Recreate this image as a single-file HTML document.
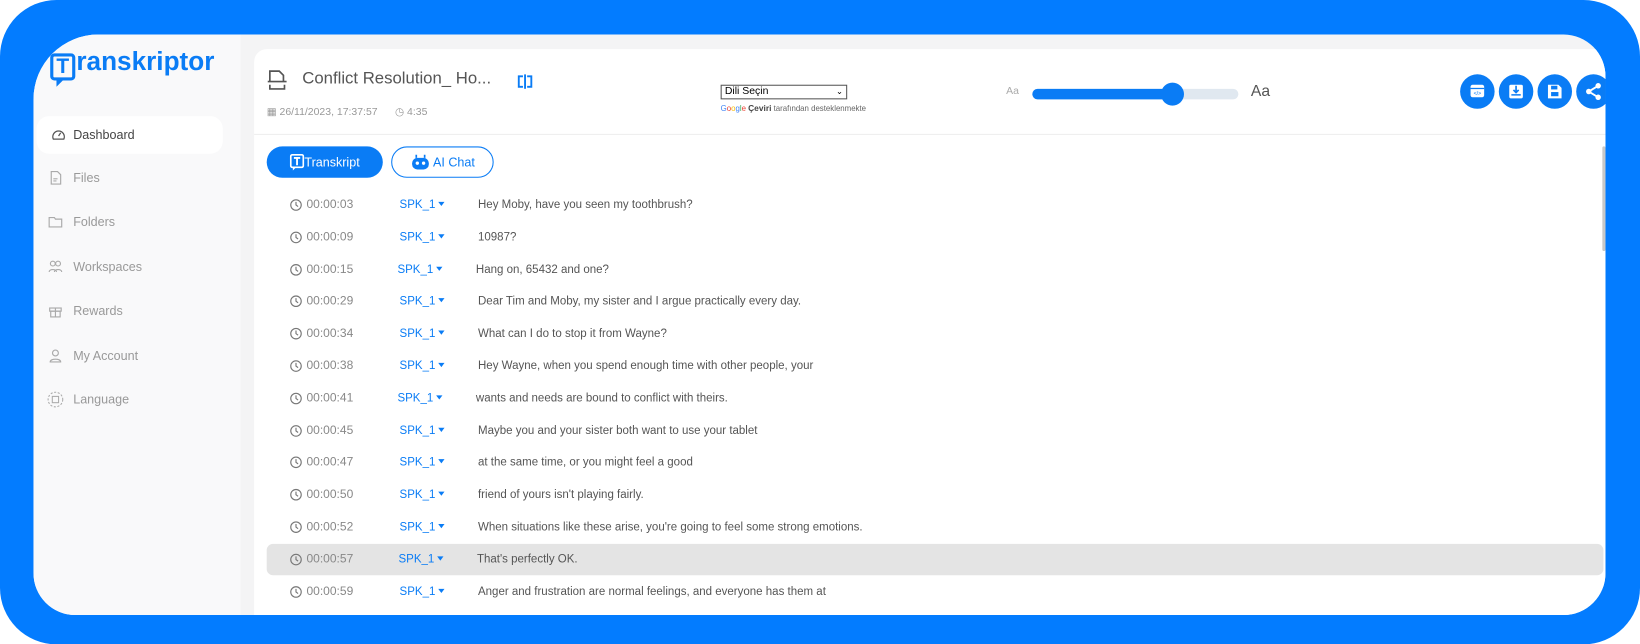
<!DOCTYPE html>
<html><head><meta charset="utf-8"><style>
*{box-sizing:border-box;margin:0;padding:0}
html,body{width:1640px;height:644px;overflow:hidden;background:#fff}
body{font-family:"Liberation Sans","DejaVu Sans",sans-serif;position:relative}
#wrap{position:absolute;left:0;top:0;width:1568px;height:616px;transform:scale(1.04592);transform-origin:0 0}
.outer{position:absolute;left:0;top:0;width:1568px;height:616px;background:#037cff;border-radius:54px}
.panel{position:absolute;left:32px;top:33px;width:1503px;height:555px;background:#f4f4f5;border-radius:62px 40px 40px 40px;overflow:hidden}
.side{position:absolute;left:0;top:0;width:198px;height:555px;background:#f9f9fa}
.logo{position:absolute;left:16px;top:12px;font-size:25px;font-weight:bold;color:#0a7cf5}
.logo .t{display:inline-block;width:24px;height:26px;border:3px solid #0a7cf5;border-radius:4px;text-align:center;line-height:20px;font-size:20px;vertical-align:-3px;margin-right:1px;position:relative}
.logo .t:after{content:"";position:absolute;left:3px;bottom:-9px;border-left:7px solid #0a7cf5;border-bottom:7px solid transparent}
.nav{position:absolute;left:0;width:178px;height:36px;font-size:12px;color:#999;line-height:36px;padding-left:38px}
.nav.act{background:#fff;border-radius:12px;color:#444;left:3px;padding-left:35px}
.nav svg{position:absolute;left:14px;top:11px}
.card{position:absolute;left:211px;top:14px;width:1300px;height:560px;background:#fff;border-radius:12px}
.title{position:absolute;left:46px;top:20px;font-size:16px;color:#555}
.meta{position:absolute;left:12px;top:55px;font-size:10px;color:#999}
.hr{position:absolute;left:0;top:81px;width:1300px;height:1px;background:#eee}
.btn1{position:absolute;left:12px;top:93px;width:111px;height:30px;background:#0a7cf5;border-radius:16px;color:#fff;font-size:12px;line-height:30px;padding-left:36px}
.btn2{position:absolute;left:131px;top:93px;width:98px;height:30px;border:1px solid #0a7cf5;border-radius:16px;color:#0a7cf5;font-size:12px;line-height:28px;padding-left:39px}
.row{position:absolute;left:12px;width:1278px;height:30px;font-size:11px;line-height:30px;color:#555}
.row.hl{background:#e4e4e4;border-radius:6px}
.row .tm{position:absolute;left:38px;color:#888;font-size:11.5px}
.row svg.c{position:absolute;left:22px;top:9px}
.row .sp{position:absolute;left:127px;color:#0a7cf5;font-size:11px}
.row .sp:after{content:"";display:inline-block;margin-left:3px;border-left:3.5px solid transparent;border-right:3.5px solid transparent;border-top:4px solid #0a7cf5;vertical-align:2px}
.row .tx{position:absolute;left:202px}
.circ{position:absolute;top:24px;width:33px;height:33px;border-radius:50%;background:#0a7cf5}
</style></head><body>
<div id="wrap">
<div class="outer"></div>
<div class="panel">
 <div class="side">
  <div class="logo"><span class="t">T</span>ranskriptor</div>
  <div class="nav act" style="top:78px"><svg width="14" height="14" viewBox="0 0 14 14" fill="none" stroke="#555" stroke-width="1.2"><path d="M2 11a5.5 5.5 0 1 1 10 0z"/><path d="M7 8l2-3"/></svg>Dashboard</div>
  <div class="nav" style="top:119px"><svg width="14" height="14" viewBox="0 0 14 14" fill="none" stroke="#aaa" stroke-width="1.1"><path d="M3 1h6l3 3v9H3z"/><path d="M5 8h4M5 10h3"/></svg>Files</div>
  <div class="nav" style="top:161px"><svg width="14" height="14" viewBox="0 0 14 14" fill="none" stroke="#aaa" stroke-width="1.1"><path d="M1 3h5l1 1.5h6V12H1z"/></svg>Folders</div>
  <div class="nav" style="top:204px"><svg width="14" height="14" viewBox="0 0 14 14" fill="none" stroke="#aaa" stroke-width="1.1"><circle cx="4.5" cy="4" r="2.3"/><circle cx="9.5" cy="4" r="2.3"/><path d="M1 12c0-3 7-3 7 0M6 12c0-3 7-3 7 0"/></svg>Workspaces</div>
  <div class="nav" style="top:246px"><svg width="14" height="14" viewBox="0 0 14 14" fill="none" stroke="#aaa" stroke-width="1.1"><rect x="1.5" y="4.5" width="11" height="3"/><rect x="2.5" y="7.5" width="9" height="5.5"/><path d="M7 4.5v8.5"/></svg>Rewards</div>
  <div class="nav" style="top:289px"><svg width="14" height="14" viewBox="0 0 14 14" fill="none" stroke="#aaa" stroke-width="1.1"><circle cx="7" cy="4.5" r="2.8"/><path d="M2 13c0-3.5 10-3.5 10 0z"/></svg>My Account</div>
  <div class="nav" style="top:331px"><svg width="16" height="16" viewBox="0 0 16 16" fill="none" stroke="#aaa" stroke-width="1" style="left:13px;top:10px"><circle cx="8" cy="8" r="7" stroke-dasharray="2 1.5"/><rect x="5" y="5" width="6" height="6"/></svg>Language</div>
 </div>
 <div class="card">
  <svg style="position:absolute;left:12px;top:19px" width="20" height="22" viewBox="0 0 20 22" fill="none" stroke="#555" stroke-width="1.6"><path d="M3 12V2h9l4 4v6"/><path d="M1 12h18"/><path d="M3 15v4h14v-4"/></svg>
  <div class="title">Conflict Resolution_ Ho...</div>
  <svg style="position:absolute;left:251px;top:24px" width="16" height="14" viewBox="0 0 16 14" fill="none" stroke="#0a7cf5" stroke-width="1.8"><path d="M6 2H2v10h4M10 2h4v10h-4M8 0v14"/></svg>
  <div class="meta">▦ 26/11/2023, 17:37:57 &nbsp;&nbsp;&nbsp;&nbsp; ◷ 4:35</div>
  <div style="position:absolute;left:446px;top:34px;width:121px;height:14px;border:1px solid #555;font-size:10px;line-height:12px;padding-left:3px;color:#000">Dili Seçin<span style="position:absolute;right:3px;font-size:8px">⌄</span></div>
  <div style="position:absolute;left:446px;top:52px;font-size:7.5px;color:#666;white-space:nowrap"><span style="color:#4285f4">G</span><span style="color:#ea4335">o</span><span style="color:#fbbc05">o</span><span style="color:#4285f4">g</span><span style="color:#34a853">l</span><span style="color:#ea4335">e</span> <b style="color:#444;font-size:8px">Çeviri</b> tarafından desteklenmekte</div>
  <div style="position:absolute;left:719px;top:35px;font-size:10px;color:#aaa">Aa</div>
  <div style="position:absolute;left:744px;top:38px;width:197px;height:10px;background:#e0e8f0;border-radius:5px"></div>
  <div style="position:absolute;left:744px;top:38px;width:133px;height:10px;background:#0a7cf5;border-radius:5px"></div>
  <div style="position:absolute;left:867px;top:32px;width:22px;height:22px;background:#0a7cf5;border-radius:50%"></div>
  <div style="position:absolute;left:953px;top:32px;font-size:15px;color:#555">Aa</div>
  <div class="circ" style="left:1153px"><svg width="33" height="33" viewBox="0 0 33 33"><rect x="10" y="10" width="13" height="12" rx="2" fill="#fff"/><rect x="10" y="13" width="13" height="1.2" fill="#0a7cf5"/><text x="16.5" y="20" font-size="5" fill="#0a7cf5" text-anchor="middle">&lt;/&gt;</text></svg></div>
  <div class="circ" style="left:1190px"><svg width="33" height="33" viewBox="0 0 33 33"><rect x="10" y="10" width="13" height="13" rx="1.5" fill="#fff"/><path d="M16.5 11v6M14 15l2.5 2.5L19 15" stroke="#0a7cf5" stroke-width="1.6" fill="none"/><rect x="12" y="19" width="9" height="1.4" fill="#0a7cf5"/></svg></div>
  <div class="circ" style="left:1227px"><svg width="33" height="33" viewBox="0 0 33 33"><path d="M10 10h10l3 3v10H10z" fill="#fff"/><rect x="13" y="11" width="6" height="3.5" fill="#0a7cf5"/><rect x="13" y="17" width="7" height="4" fill="#0a7cf5"/></svg></div>
  <div class="circ" style="left:1264px"><svg width="33" height="33" viewBox="0 0 33 33"><circle cx="21" cy="11" r="2.6" fill="#fff"/><circle cx="12" cy="16.5" r="2.6" fill="#fff"/><circle cx="21" cy="22" r="2.6" fill="#fff"/><path d="M21 11l-9 5.5 9 5.5" stroke="#fff" stroke-width="1.8" fill="none"/></svg></div>
  <div class="hr"></div>
  <div style="position:absolute;left:1289px;top:93px;width:3px;height:100px;background:#c8c8c8;border-radius:2px"></div>
  <div class="btn1"><svg style="position:absolute;left:22px;top:7px" width="14" height="17" viewBox="0 0 14 17"><rect x="1" y="1" width="12" height="12" rx="1.5" fill="none" stroke="#fff" stroke-width="1.6"/><path d="M4 4h6M7 4v7" stroke="#fff" stroke-width="1.8"/><path d="M3 13v3l3-3" fill="#fff"/></svg>Transkript</div>
  <div class="btn2"><svg style="position:absolute;left:18px;top:5px" width="18" height="18" viewBox="0 0 18 18"><path d="M5 2v3M13 2v3" stroke="#0a7cf5" stroke-width="1.6"/><rect x="1" y="5" width="16" height="11" rx="5" fill="#0a7cf5"/><circle cx="6" cy="10" r="1.6" fill="#fff"/><circle cx="12" cy="10" r="1.6" fill="#fff"/></svg>AI Chat</div>
 </div>
</div>
<div id="rows" style="position:absolute;left:243px;top:0"></div>
</div>
<script>
var d=[["00:00:03","Hey Moby, have you seen my toothbrush?",0],["00:00:09","10987?",0],["00:00:15","Hang on, 65432 and one?",-2],["00:00:29","Dear Tim and Moby, my sister and I argue practically every day.",0],["00:00:34","What can I do to stop it from Wayne?",0],["00:00:38","Hey Wayne, when you spend enough time with other people, your",0],["00:00:41","wants and needs are bound to conflict with theirs.",-2],["00:00:45","Maybe you and your sister both want to use your tablet",0],["00:00:47","at the same time, or you might feel a good",0],["00:00:50","friend of yours isn't playing fairly.",0],["00:00:52","When situations like these arise, you're going to feel some strong emotions.",0],["00:00:57","That's perfectly OK.",-1],["00:00:59","Anger and frustration are normal feelings, and everyone has them at",0]];
var h="";d.forEach(function(r,i){var y=181+i*30.8;h+='<div class="row'+(i==11?' hl':'')+'" style="top:'+y+'px"><svg class="c" width="12" height="12" viewBox="0 0 12 12" fill="none" stroke="#777" stroke-width="1.1"><circle cx="6" cy="6" r="5"/><path d="M6 3v3l2 1.5"/></svg><span class="tm">'+r[0]+'</span><span class="sp" style="margin-left:'+r[2]+'px">SPK_1</span><span class="tx" style="margin-left:'+r[2]+'px">'+r[1]+'</span></div>';});
document.getElementById('rows').innerHTML=h;
</script>
</body></html>
